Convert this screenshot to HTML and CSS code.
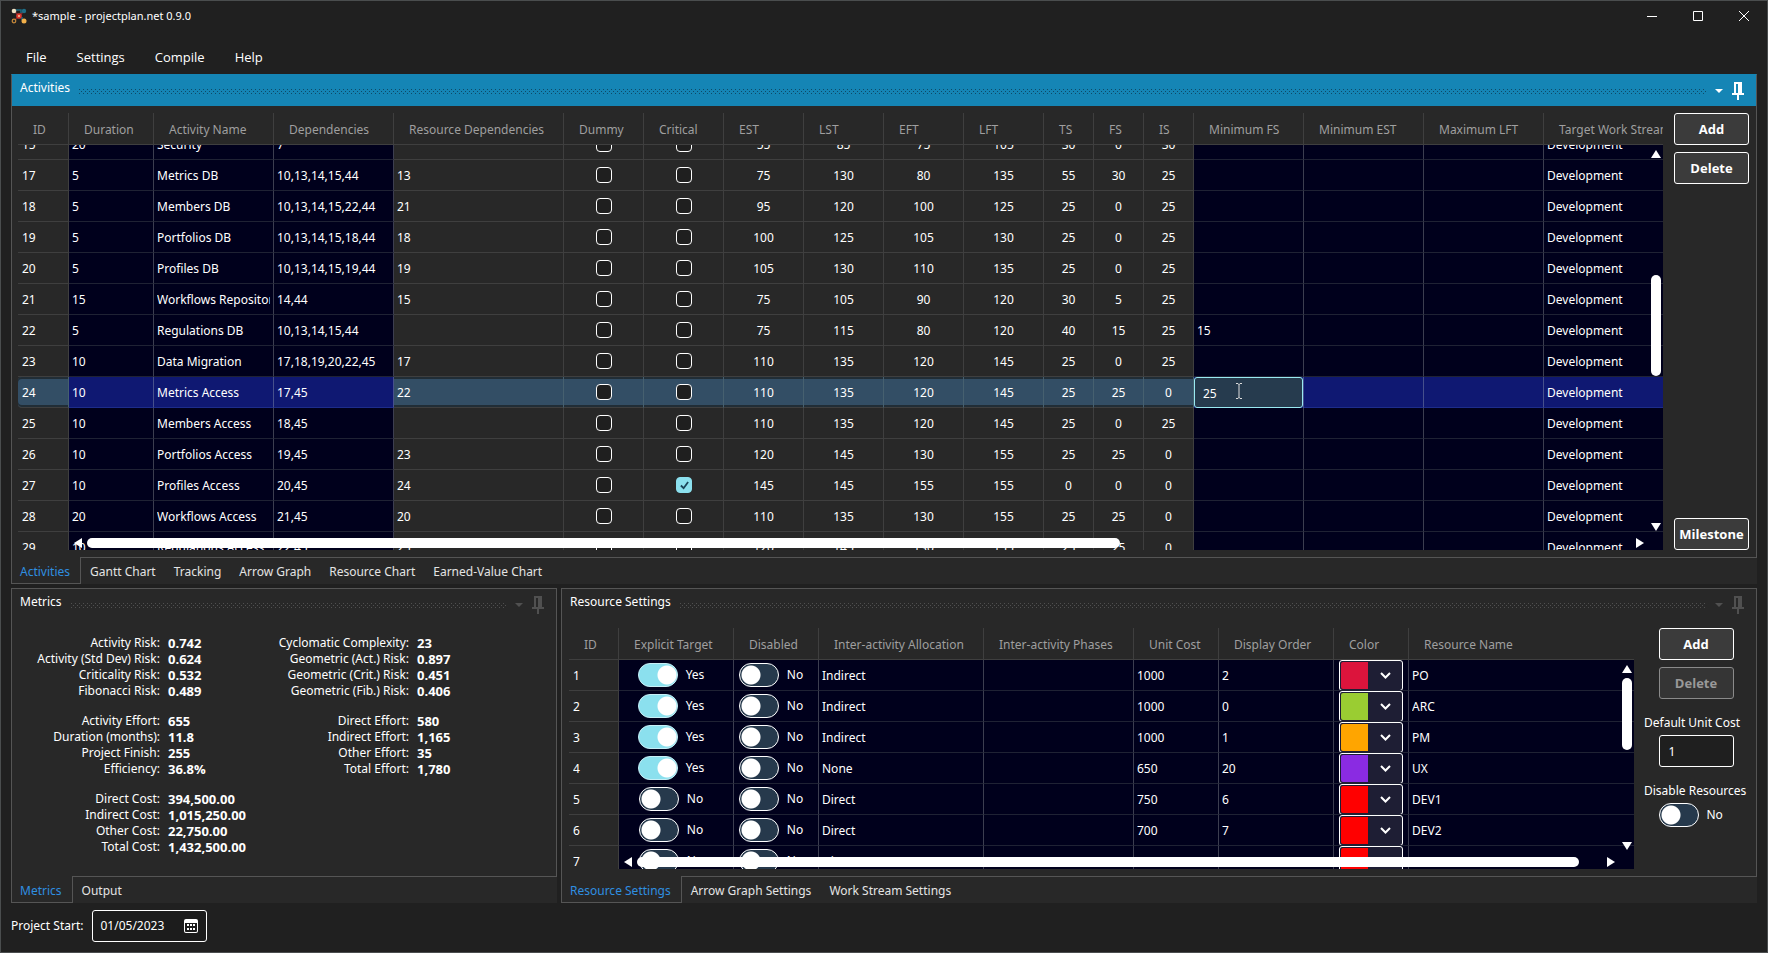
FILE: index.html
```html
<!DOCTYPE html>
<html lang="en">
<head>
<meta charset="utf-8">
<title>*sample - projectplan.net 0.9.0</title>
<link rel="stylesheet" href="styles.css">
</head>
<body>
<div class="window">
  <header class="titlebar">
    <svg class="logo" viewBox="0 0 16 16" aria-hidden="true">
      <path d="M3 3l5 5 5-5M3 13l5-5 5 5" stroke="#7a2a30" stroke-width="1.5" fill="none"/>
      <path d="M5 2h5v3M11 9v3" stroke="#1c6a80" stroke-width="1.500" fill="none"/>
      <circle cx="3" cy="3" r="2.300" fill="#ece0c4"/>
      <circle cx="13" cy="3" r="2.200" fill="#1f6f88"/>
      <circle cx="8" cy="8" r="2.800" fill="#e0382c"/>
      <circle cx="8" cy="8" r="1" fill="#f7c9a0"/>
      <circle cx="3" cy="13" r="1.800" fill="#2a2a2a" stroke="#c98a3a" stroke-width="1.200"/>
      <circle cx="13" cy="13" r="2.500" fill="#f2b04a"/>
    </svg>
    <h1 class="title">*sample - projectplan.net 0.9.0</h1>
    <div class="window-buttons">
      <button class="window-button" aria-label="Minimize"><svg viewBox="0 0 12 12"><path d="M1 6.5h10"/></svg></button>
      <button class="window-button" aria-label="Maximize"><svg viewBox="0 0 12 12"><path d="M1.5 1.5h9v9h-9z"/></svg></button>
      <button class="window-button" aria-label="Close"><svg viewBox="0 0 12 12"><path d="M1 1l10 10M11 1L1 11"/></svg></button>
    </div>
  </header>

  <nav class="menu">
    <button class="menu-item">File</button>
    <button class="menu-item">Settings</button>
    <button class="menu-item">Compile</button>
    <button class="menu-item">Help</button>
  </nav>

  <main class="workspace">
    <section class="dock dock-main">
      <div class="panel panel-active">
        <div class="panel-head">
          <h2 class="panel-title">Activities</h2>
          <span class="grip"></span>
          <button class="head-button" aria-label="Panel menu"><svg class="caret" viewBox="0 0 8 4"><path d="M0 0h8l-4 4z"/></svg></button>
          <button class="head-button" aria-label="Pin"><svg class="pin" viewBox="0 0 12 18"><path d="M2 0h8v11h2v2H7v5H5v-5H0v-2h2zM4 2v9h2V2z" fill-rule="evenodd"/></svg></button>
        </div>
        <div class="panel-body activities-body">
          <div class="grid-frame">
            <div class="grid-view" data-scroll="16">
              <table class="data-grid activities-grid">
                <colgroup id="activity-cols"></colgroup>
                <thead><tr id="activity-head"></tr></thead>
                <tbody id="activity-rows"></tbody>
              </table>
            </div>
            <div class="vscroll vscroll-activities"><i class="arrow up"></i><span class="track"><span class="thumb"></span></span><i class="arrow down"></i></div>
            <div class="hscroll hscroll-activities"><i class="arrow left"></i><span class="track"><span class="thumb"></span></span><i class="arrow right"></i></div>
          </div>
          <div class="side">
            <button class="button">Add</button>
            <button class="button">Delete</button>
            <button class="button button-last">Milestone</button>
          </div>
        </div>
      </div>
      <div class="tabs">
        <button class="tab tab-active">Activities</button><button class="tab">Gantt Chart</button><button class="tab">Tracking</button><button class="tab">Arrow Graph</button><button class="tab">Resource Chart</button><button class="tab">Earned-Value Chart</button>
      </div>
    </section>

    <section class="dock">
      <div class="panel">
        <div class="panel-head">
          <h2 class="panel-title">Metrics</h2>
          <span class="grip"></span>
          <button class="head-button" aria-label="Panel menu"><svg class="caret" viewBox="0 0 8 4"><path d="M0 0h8l-4 4z"/></svg></button>
          <button class="head-button" aria-label="Pin"><svg class="pin" viewBox="0 0 12 18"><path d="M2 0h8v11h2v2H7v5H5v-5H0v-2h2zM4 2v9h2V2z" fill-rule="evenodd"/></svg></button>
        </div>
        <div class="metrics">
          <dl class="metric-group"><dt>Activity Risk:</dt><dd>0.742</dd><dt>Activity (Std Dev) Risk:</dt><dd>0.624</dd><dt>Criticality Risk:</dt><dd>0.532</dd><dt>Fibonacci Risk:</dt><dd>0.489</dd></dl>
          <dl class="metric-group"><dt>Cyclomatic Complexity:</dt><dd>23</dd><dt>Geometric (Act.) Risk:</dt><dd>0.897</dd><dt>Geometric (Crit.) Risk:</dt><dd>0.451</dd><dt>Geometric (Fib.) Risk:</dt><dd>0.406</dd></dl>
          <dl class="metric-group"><dt>Activity Effort:</dt><dd>655</dd><dt>Duration (months):</dt><dd>11.8</dd><dt>Project Finish:</dt><dd>255</dd><dt>Efficiency:</dt><dd>36.8%</dd></dl>
          <dl class="metric-group"><dt>Direct Effort:</dt><dd>580</dd><dt>Indirect Effort:</dt><dd>1,165</dd><dt>Other Effort:</dt><dd>35</dd><dt>Total Effort:</dt><dd>1,780</dd></dl>
          <dl class="metric-group"><dt>Direct Cost:</dt><dd>394,500.00</dd><dt>Indirect Cost:</dt><dd>1,015,250.00</dd><dt>Other Cost:</dt><dd>22,750.00</dd><dt>Total Cost:</dt><dd>1,432,500.00</dd></dl>
        </div>
      </div>
      <div class="tabs">
        <button class="tab tab-active">Metrics</button><button class="tab">Output</button>
      </div>
    </section>

    <section class="dock">
      <div class="panel">
        <div class="panel-head">
          <h2 class="panel-title">Resource Settings</h2>
          <span class="grip"></span>
          <button class="head-button" aria-label="Panel menu"><svg class="caret" viewBox="0 0 8 4"><path d="M0 0h8l-4 4z"/></svg></button>
          <button class="head-button" aria-label="Pin"><svg class="pin" viewBox="0 0 12 18"><path d="M2 0h8v11h2v2H7v5H5v-5H0v-2h2zM4 2v9h2V2z" fill-rule="evenodd"/></svg></button>
        </div>
        <div class="panel-body resources-body">
          <div class="grid-frame">
            <div class="grid-view" data-scroll="0">
              <table class="data-grid resources-grid">
                <colgroup id="resource-cols"></colgroup>
                <thead><tr id="resource-head"></tr></thead>
                <tbody id="resource-rows"></tbody>
              </table>
            </div>
            <div class="vscroll vscroll-resources"><i class="arrow up"></i><span class="track"><span class="thumb"></span></span><i class="arrow down"></i></div>
            <div class="hscroll hscroll-resources"><i class="arrow left"></i><span class="track"><span class="thumb"></span></span><i class="arrow right"></i></div>
          </div>
          <div class="side side-wide">
            <button class="button">Add</button>
            <button class="button" disabled>Delete</button>
            <label class="side-label" for="default-cost">Default Unit Cost</label>
            <input class="text-box" id="default-cost" type="text" value="1">
            <label class="side-label" for="disable-resources">Disable Resources</label>
            <span class="switch-line"><input class="switch" id="disable-resources" type="checkbox" role="switch"><span>No</span></span>
          </div>
        </div>
      </div>
      <div class="tabs">
        <button class="tab tab-active">Resource Settings</button><button class="tab">Arrow Graph Settings</button><button class="tab">Work Stream Settings</button>
      </div>
    </section>
  </main>

  <footer class="footer">
    <label for="project-start">Project Start:</label>
    <span class="date-box">
      <input id="project-start" type="text" value="01/05/2023">
      <button class="date-button" aria-label="Open calendar"><svg viewBox="0 0 14 14"><path d="M2 0h10a2 2 0 0 1 2 2v10a2 2 0 0 1-2 2H2a2 2 0 0 1-2-2V2a2 2 0 0 1 2-2zM1 4v8a1 1 0 0 0 1 1h10a1 1 0 0 0 1-1V4z" fill-rule="evenodd"/><path d="M3 5h2v2H3zM6 5h2v2H6zM9 5h2v2H9zM3 9h2v2H3zM6 9h2v2H6zM9 9h2v2H9z"/></svg></button>
    </span>
  </footer>
</div>
<script src="grid.js"></script>
</body>
</html>
```

FILE: styles.css
```css
* { box-sizing: border-box; }

body {
  margin: 0;
  background: #202020;
  color: #fff;
  font: 12px/18px "Noto Sans", "Open Sans", sans-serif;
}

button, input, select { font: inherit; color: inherit; margin: 0; }
button { background: none; border: 0; padding: 0; }
h1, h2, dl, dd { margin: 0; font: inherit; }
svg { display: block; }

.window {
  display: flex;
  flex-direction: column;
  min-height: 100vh;
  border: 1px solid #4a4d4e;
  padding: 0 10px;
}

.titlebar {
  display: flex;
  align-items: center;
  height: 30px;
  gap: 5px;
}
.logo { width: 16px; height: 16px; }
.title { font-size: 11px; flex: 1; }
.window-buttons { display: flex; margin-right: -10px; }
.window-button { width: 46px; height: 28px; display: grid; place-items: center; }
.window-button svg { width: 12px; height: 12px; fill: none; stroke: #fff; }

.menu { display: flex; height: 43px; padding-top: 9px; font-family: "Open Sans", sans-serif; font-size: 13px; }
.menu-item { height: 34px; padding: 0 15px; }

.workspace {
  flex: 1;
  display: grid;
  grid-template-columns: 546fr 1196fr;
  grid-template-rows: 510fr 315fr;
  gap: 4px;
}
.dock { display: flex; flex-direction: column; min-width: 0; min-height: 0; background: #282828; }
.dock-main { grid-column: 1 / -1; }

.panel {
  flex: 1;
  display: flex;
  flex-direction: column;
  min-height: 0;
  border: 1px solid #555;
}
.panel-head {
  display: flex;
  align-items: center;
  height: 31px;
  padding: 0 12px 6px 8px;
  gap: 9px;
}
.panel-active { border-top-color: #1585b5; }
.panel-active .panel-head { background: #1585b5; }
.grip {
  flex: 1;
  height: 5px;
  margin-top: 7px;
  color: #505050;
  background:
    conic-gradient(at 1px 1px, transparent 75%, currentColor 0) 0 0 / 4px 4px,
    conic-gradient(at 1px 1px, transparent 75%, currentColor 0) 2px 2px / 4px 4px;
}
.panel-active .grip { color: #0d4a68; }
.head-button { padding-top: 7px; }
.caret { width: 8px; height: 4px; fill: #505050; }
.pin { width: 12px; height: 18px; fill: #505050; }
.panel-active .caret, .panel-active .pin { fill: #fff; }

.panel-body { flex: 1; display: flex; min-height: 0; gap: 11px; }
.activities-body { padding: 7px 7px 7px 6px; }
.resources-body { padding: 8px 8px 7px 7px; gap: 10px; }

.grid-frame { position: relative; flex: 1; min-width: 0; min-height: 0; }
.grid-view { position: absolute; inset: 0; overflow: hidden; }

.data-grid { border-collapse: separate; border-spacing: 0; table-layout: fixed; }
.activities-grid { width: 1666px; }
.resources-grid { width: 100%; }
.data-grid th, .data-grid td {
  border-right: 1px solid #3f3f3f;
  border-bottom: 1px solid #3f3f3f;
  text-align: left;
  white-space: nowrap;
  overflow: hidden;
}
.data-grid th:last-child, .data-grid td:last-child { border-right: 0; }
.data-grid th {
  position: sticky;
  top: 0;
  z-index: 1;
  height: 32px;
  padding: 2px 0 0 15px;
  background: #282828;
  color: #9f9f9f;
  font-weight: 400;
}
.data-grid td { height: 31px; padding: 0 3px; }
.data-grid td:first-child { padding-left: 4px; }
.data-grid td.center { text-align: center; padding: 0; }
.data-grid td.check-cell { padding: 0; }
.data-grid td.edit { background: #00001c; border-right-color: #3c3e50; border-bottom-color: #1f2234; }
.cell-text { display: block; overflow: hidden; padding-top: 2px; }

.row-selected td {
  background: #334e65;
  border-right-color: #46606f;
  box-shadow: inset 0 2px #212d36, inset 0 -2px #212d36;
}
.row-selected td:first-child { border-radius: 4px 0 0 4px; }
.data-grid .row-selected td.edit { background: #0f1872; border-bottom-color: #1d2c8a; border-right-color: #46508c; box-shadow: none; }
.data-grid .row-selected td.editing { padding: 0; position: relative; border-bottom: 0; }
.cell-input {
  display: block;
  width: 100%;
  height: 31px;
  padding: 2px 8px 0;
  border: 1px solid #99e9f2;
  border-radius: 3px;
  background: #263b4e;
}
.ibeam { position: absolute; left: 41px; top: 6px; width: 8px; height: 16px; fill: none; stroke: #ddd; }

.check {
  appearance: none;
  display: block;
  width: 16px;
  height: 16px;
  border: 1px solid #fff;
  border-radius: 4px;
  background: #1f1f1f;
}
.check:checked {
  border-color: #8be0ee;
  background: #8be0ee;
}
.check-wrap { position: relative; display: block; width: 16px; margin: 0 auto; }
.check-wrap svg { position: absolute; inset: 4px; width: 9px; height: 9px; fill: none; stroke: #1b4358; stroke-width: 2; }

.switch-line { display: flex; align-items: center; gap: 8px; }
.switch-cell .switch-line { justify-content: center; padding-right: 10px; }
.data-grid td.switch-cell { padding: 0; }
.switch {
  appearance: none;
  flex: none;
  width: 40px;
  height: 24px;
  border: 1px solid #fff;
  border-radius: 12px;
  background: radial-gradient(circle at 11px 11px, #fff 9px, transparent 10px) #26394c;
}
.switch:checked {
  border-color: #c8eff6;
  background: radial-gradient(circle at 28px 11px, #fff 9px, transparent 10px) #8be0ee;
}

.data-grid td.color-cell { padding: 0 5px; }
.color-box { position: relative; display: block; margin-bottom: -1px; }
.color-box select {
  appearance: none;
  display: block;
  width: 64px;
  height: 31px;
  border: 1px solid #fff;
  border-radius: 3px;
  background: #1e1e34;
  color: transparent;
}
.color-box .swatch { position: absolute; left: 2px; top: 2px; width: 27px; bottom: 2px; border-radius: 2px 0 0 2px; }
.color-box svg { position: absolute; left: 41px; top: 12px; width: 11px; height: 7px; fill: none; stroke: #fff; stroke-width: 2; }

.vscroll, .hscroll { position: absolute; z-index: 2; display: flex; align-items: center; }
.vscroll { flex-direction: column; right: 2px; width: 11px; }
.hscroll { height: 10px; }
.track { flex: 1; display: flex; }
.thumb { background: #fff; border-radius: 5px; }
.vscroll .track { flex-direction: column; width: 10px; }
.arrow { width: 0; height: 0; border: 5px solid transparent; }
.up { border-top: 0; border-bottom: 8px solid #fff; }
.down { border-bottom: 0; border-top: 8px solid #fff; }
.left { border-left: 0; border-right: 8px solid #fff; }
.right { border-right: 0; border-left: 8px solid #fff; }
.vscroll-activities { top: 37px; bottom: 19px; }
.vscroll-activities .track { padding-top: 117px; }
.vscroll-activities .thumb { flex: 0 0 101px; }
.hscroll-activities { left: 56px; right: 19px; bottom: 2px; }
.hscroll-activities .track { padding: 0 0 0 5px; }
.hscroll-activities .thumb { width: calc(100% * 2 / 3); height: 10px; }
.vscroll-resources { top: 37px; bottom: 19px; }
.vscroll-resources .track { padding-top: 5px; }
.vscroll-resources .thumb { flex: 0 0 72px; }
.hscroll-resources { left: 55px; right: 19px; bottom: 2px; }
.hscroll-resources .track { padding: 0 28px 0 5px; }
.hscroll-resources .thumb { width: 100%; height: 10px; }

.side { display: flex; flex-direction: column; align-items: center; gap: 7px; width: 75px; }
.side-wide { width: 104px; }
.button {
  width: 75px;
  height: 32px;
  border: 1px solid #fff;
  border-radius: 3px;
  background: #3b3b3b;
  font: 700 13px/18px "Open Sans", sans-serif;
}
.button:disabled { color: #999; border-color: #8a8a8a; background: #353535; }
.button-last { margin-top: auto; }
.side-label { align-self: flex-start; margin-top: 8px; white-space: nowrap; }
.text-box {
  width: 75px;
  height: 32px;
  margin-top: -4px;
  padding: 0 9px;
  border: 1px solid #fff;
  border-radius: 3px;
  background: #1f1f1f;
}
.side .switch-line { width: 75px; margin-top: -4px; }

.tabs { display: flex; height: 26px; }
.tab { height: 26px; padding: 2px 9px 0; color: #e4e4e4; white-space: nowrap; }
.tab-active {
  height: 27px;
  margin-top: -1px;
  padding: 3px 10px 0 8px;
  border: 1px solid #555;
  border-top: 0;
  background: #282828;
  color: #2f8fe0;
}

.metrics {
  display: grid;
  grid-template-columns: 249px 1fr;
  gap: 14px 0;
  padding: 15px 0 0 15px;
  align-content: start;
}
.metric-group { display: grid; grid-template-columns: 133px auto; gap: 0 8px; line-height: 16px; }
.metric-group dt { text-align: right; white-space: nowrap; }
.metric-group dd { font: 700 13px/16px "Open Sans", sans-serif; }

.footer { display: flex; align-items: center; gap: 9px; height: 32px; margin: 7px 0 10px; }
.date-box {
  display: flex;
  align-items: center;
  width: 115px;
  height: 32px;
  padding: 0 8px 0 7px;
  border: 1px solid #fff;
  border-radius: 3px;
  background: #1c1c1c;
}
.date-box input { flex: 1; min-width: 0; padding: 0; border: 0; background: none; }
.date-button svg { width: 14px; height: 14px; fill: #fff; }
```

FILE: grid.js
```js
const activityCols = [
  ["ID", 51], ["Duration", 85, "edit"], ["Activity Name", 120, "edit"], ["Dependencies", 120, "edit"],
  ["Resource Dependencies", 170], ["Dummy", 80, "check"], ["Critical", 80, "check"],
  ["EST", 80, "center"], ["LST", 80, "center"], ["EFT", 80, "center"], ["LFT", 80, "center"],
  ["TS", 50, "center"], ["FS", 50, "center"], ["IS", 50, "center"],
  ["Minimum FS", 110, "edit"], ["Minimum EST", 120, "edit"], ["Maximum LFT", 120, "edit"], ["Target Work Streams", 140, "edit"]
];

const activities = [
  "15|20|Security|7||||55|85|75|105|30|0|30",
  "17|5|Metrics DB|10,13,14,15,44|13|||75|130|80|135|55|30|25",
  "18|5|Members DB|10,13,14,15,22,44|21|||95|120|100|125|25|0|25",
  "19|5|Portfolios DB|10,13,14,15,18,44|18|||100|125|105|130|25|0|25",
  "20|5|Profiles DB|10,13,14,15,19,44|19|||105|130|110|135|25|0|25",
  "21|15|Workflows Repository|14,44|15|||75|105|90|120|30|5|25",
  "22|5|Regulations DB|10,13,14,15,44||||75|115|80|120|40|15|25|15",
  "23|10|Data Migration|17,18,19,20,22,45|17|||110|135|120|145|25|0|25",
  "24|10|Metrics Access|17,45|22|||110|135|120|145|25|25|0|25",
  "25|10|Members Access|18,45||||110|135|120|145|25|0|25",
  "26|10|Portfolios Access|19,45|23|||120|145|130|155|25|25|0",
  "27|10|Profiles Access|20,45|24||1|145|145|155|155|0|0|0",
  "28|20|Workflows Access|21,45|20|||110|135|130|155|25|25|0",
  "29|10|Regulations Access|22,45|25|||120|145|130|155|25|25|0"
].map(line => line.split("|"));

const resourceCols = [
  ["ID", 50], ["Explicit Target", 115, "switch"], ["Disabled", 85, "switch"], ["Inter-activity Allocation", 165, "edit"],
  ["Inter-activity Phases", 150, "edit"], ["Unit Cost", 85, "edit"], ["Display Order", 115, "edit"],
  ["Color", 75, "color"], ["Resource Name", 0, "edit"]
];

const resources = [
  "1|1||Indirect||1000|2|#dc143c|PO",
  "2|1||Indirect||1000|0|#9acd32|ARC",
  "3|1||Indirect||1000|1|#ffa500|PM",
  "4|1||None||650|20|#8a2be2|UX",
  "5|||Direct||750|6|#ff0000|DEV1",
  "6|||Direct||700|7|#ff0000|DEV2",
  "7|||Direct||||#ff0000|"
].map(line => line.split("|"));

const selectedId = "24";

function cell(col, value, selected) {
  const [name, , kind] = col;
  if (kind === "check") {
    const on = value === "1";
    const tick = on ? '<svg viewBox="0 0 10 10"><path d="M1 5l3 3 5-7"/></svg>' : "";
    return `<td class="check-cell"><span class="check-wrap"><input class="check" type="checkbox" aria-label="${name}"${on ? " checked" : ""}>${tick}</span></td>`;
  }
  if (kind === "switch") {
    const on = value === "1";
    return `<td class="edit switch-cell"><label class="switch-line"><input class="switch" type="checkbox" role="switch"${on ? " checked" : ""}><span>${on ? "Yes" : "No"}</span></label></td>`;
  }
  if (kind === "color") {
    return `<td class="edit color-cell"><span class="color-box"><select aria-label="Color"><option></option></select><span class="swatch" style="background:${value}"></span><svg viewBox="0 0 11 7"><path d="M1 1l4.5 4.5L10 1"/></svg></span></td>`;
  }
  if (selected && name === "Minimum FS") {
    return `<td class="edit editing"><input class="cell-input" type="text" aria-label="${name}" value="${value}"><svg class="ibeam" viewBox="0 0 8 16"><path d="M1 .5h2l1 1 1-1h2M1 15.5h2l1-1 1 1h2M4 1v14"/></svg></td>`;
  }
  return `<td class="${kind || ""}"><span class="cell-text">${value || ""}</span></td>`;
}

function fill(prefix, cols, rows) {
  document.getElementById(prefix + "-cols").innerHTML =
    cols.map(c => c[1] ? `<col style="width:${c[1]}px">` : "<col>").join("");
  document.getElementById(prefix + "-head").innerHTML = cols.map(c => `<th scope="col">${c[0]}</th>`).join("");
  document.getElementById(prefix + "-rows").innerHTML = rows.map(row => {
    const selected = prefix === "activity" && row[0] === selectedId;
    const cells = cols.map((c, i) => {
      const value = c[0] === "Target Work Streams" ? "Development" : row[i];
      return cell(c, value, selected);
    });
    return `<tr${selected ? ' class="row-selected"' : ""}>${cells.join("")}</tr>`;
  }).join("");
}

fill("activity", activityCols, activities);
fill("resource", resourceCols, resources);
document.querySelectorAll(".grid-view").forEach(view => { view.scrollTop = Number(view.dataset.scroll); });
```
